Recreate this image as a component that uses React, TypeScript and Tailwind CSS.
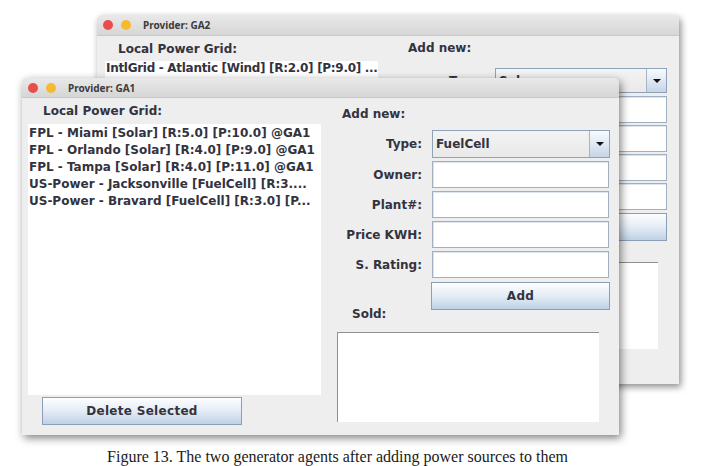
import React from "react";

const F = "[font-family:'DejaVu_Sans',sans-serif]";

function TitleBar({ title, h }: { title: string; h: string }) {
  return (
    <div
      className={`${h} shrink-0 flex items-center rounded-t-[5px] bg-gradient-to-b from-[#e9e9e9] to-[#d6d6d6] border-b border-[#c9c9c9]`}
    >
      <div className="ml-[6px] w-[10px] h-[10px] rounded-full bg-[#ea4c4c]" />
      <div className="ml-[8px] w-[10px] h-[10px] rounded-full bg-[#f4bb30]" />
      <div className="ml-[12px] text-[10px] font-bold text-[#3b3b3b] [font-family:'Noto_Sans',sans-serif] leading-none">
        {title}
      </div>
    </div>
  );
}

function JButton({ label, cls }: { label: string; cls: string }) {
  return (
    <div
      className={`${cls} flex items-center justify-center border border-[#8a9eb4] bg-gradient-to-b from-[#fdfeff] via-[#e4ecf5] to-[#bfd1e5] text-[12px] font-bold tracking-[0.3px] text-[#333340] ${F}`}
    >
      {label}
    </div>
  );
}

function Field({ cls }: { cls: string }) {
  return (
    <div
      className={`${cls} bg-white border border-[#a0b0c1] shadow-[inset_1px_1px_0_#dfe5ec]`}
    />
  );
}

function Combo({ cls, value }: { cls: string; value: string }) {
  return (
    <div
      className={`${cls} flex border border-[#8ea2b8] bg-gradient-to-b from-[#f3f3f3] to-[#e9e9e9]`}
    >
      <div
        className={`flex-1 flex items-center pl-[3px] text-[12px] font-bold text-[#333340] ${F} border-r border-[#a5b5c6]`}
      >
        {value}
      </div>
      <div className="w-[19px] flex items-center justify-center bg-gradient-to-b from-[#fafcfe] to-[#c4d5e7]">
        <div className="w-0 h-0 border-l-[4px] border-r-[4px] border-t-[4px] border-l-transparent border-r-transparent border-t-[#111]" />
      </div>
    </div>
  );
}

function Label({ text, cls }: { text: string; cls: string }) {
  return (
    <div
      className={`${cls} flex items-center justify-end text-[12px] font-bold text-[#333340] ${F} leading-none`}
    >
      {text}
    </div>
  );
}

const frontItems = [
  "FPL - Miami [Solar] [R:5.0] [P:10.0] @GA1",
  "FPL - Orlando [Solar] [R:4.0] [P:9.0] @GA1",
  "FPL - Tampa [Solar] [R:4.0] [P:11.0] @GA1",
  "US-Power - Jacksonville [FuelCell] [R:3....",
  "US-Power - Bravard [FuelCell] [R:3.0] [P...",
];

export default function App() {
  return (
    <div className={`w-[704px] h-[466px] bg-white overflow-hidden ${F}`}>
      <div className="relative h-[448px]">
        {/* Back window GA2 */}
        <div className="absolute left-[97px] top-[15px] w-[582px] h-[369px] flex flex-col bg-[#eeeeee] rounded-t-[5px] shadow-[2px_3px_7px_rgba(0,0,0,0.45)]">
          <TitleBar title="Provider: GA2" h="h-[21px]" />
          <div className="flex flex-1">
            <div className="flex flex-col pl-[8px]">
              <div className="h-[25px] pl-[13px] flex items-center text-[12px] font-bold text-[#333340] leading-none">
                Local Power Grid:
              </div>
              <div className="w-[273px] h-[270px] bg-white pl-[1px] text-[12px] font-bold tracking-[-0.3px] text-[#333340] leading-[15px] whitespace-nowrap overflow-hidden">
                IntlGrid - Atlantic [Wind] [R:2.0] [P:9.0] ...
              </div>
              <JButton label="Delete Selected" cls="ml-[14px] mt-[2px] w-[200px] h-[28px]" />
            </div>
            <div className="flex flex-col ml-[25px]">
              <div className="h-[32px] pl-[5px] pt-[6px] text-[12px] font-bold text-[#333340] leading-[12px]">
                Add new:
              </div>
              <div className="flex">
                <Label text="Type:" cls="w-[82px] h-[25px]" />
                <Combo cls="ml-[10px] w-[172px] h-[25px]" value="Solar" />
              </div>
              <div className="flex mt-[3px]">
                <Label text="Owner:" cls="w-[82px] h-[27px]" />
                <Field cls="ml-[10px] w-[172px] h-[27px]" />
              </div>
              <div className="flex mt-[2px]">
                <Label text="Plant#:" cls="w-[82px] h-[27px]" />
                <Field cls="ml-[10px] w-[172px] h-[27px]" />
              </div>
              <div className="flex mt-[2px]">
                <Label text="Price KWH:" cls="w-[82px] h-[27px]" />
                <Field cls="ml-[10px] w-[172px] h-[27px]" />
              </div>
              <div className="flex mt-[2px]">
                <Label text="S. Rating:" cls="w-[82px] h-[27px]" />
                <Field cls="ml-[10px] w-[172px] h-[27px]" />
              </div>
              <div className="flex mt-[3px]">
                <div className="w-[82px]" />
                <JButton label="Add" cls="ml-[10px] w-[172px] h-[28px]" />
              </div>
              <div className="-mt-[4px] h-[16px] pl-[15px] flex items-center text-[12px] font-bold text-[#333340] leading-none">
                Sold:
              </div>
              <div className="mt-[9px] w-[255px] h-[87px] bg-white border-t border-l border-[#8f8f8f]" />
            </div>
          </div>
        </div>

        {/* Front window GA1 */}
        <div className="absolute left-[22px] top-[78px] w-[597px] h-[357px] flex flex-col bg-[#eeeeee] rounded-t-[5px] shadow-[2px_3px_8px_rgba(0,0,0,0.5)]">
          <TitleBar title="Provider: GA1" h="h-[20px]" />
          <div className="flex flex-1">
            <div className="flex flex-col pl-[6px]">
              <div className="h-[26px] pl-[15px] flex items-center text-[12px] font-bold text-[#333340] leading-none">
                Local Power Grid:
              </div>
              <div className="w-[293px] h-[271px] bg-white pl-[1px] pt-[1px] text-[12px] font-bold text-[#333340] leading-[17px] whitespace-nowrap overflow-hidden">
                {frontItems.map((t) => (
                  <div key={t}>{t}</div>
                ))}
              </div>
              <JButton label="Delete Selected" cls="ml-[14px] mt-[2px] w-[200px] h-[28px]" />
            </div>
            <div className="flex flex-col ml-[16px]">
              <div className="h-[32px] pl-[5px] pt-[10px] text-[12px] font-bold text-[#333340] leading-[12px]">
                Add new:
              </div>
              <div className="flex">
                <Label text="Type:" cls="w-[85px] h-[28px]" />
                <Combo cls="ml-[10px] w-[178px] h-[28px]" value="FuelCell" />
              </div>
              <div className="flex mt-[3px]">
                <Label text="Owner:" cls="w-[85px] h-[27px]" />
                <Field cls="ml-[10px] w-[177px] h-[27px]" />
              </div>
              <div className="flex mt-[3px]">
                <Label text="Plant#:" cls="w-[85px] h-[27px]" />
                <Field cls="ml-[10px] w-[177px] h-[27px]" />
              </div>
              <div className="flex mt-[3px]">
                <Label text="Price KWH:" cls="w-[85px] h-[27px]" />
                <Field cls="ml-[10px] w-[177px] h-[27px]" />
              </div>
              <div className="flex mt-[3px]">
                <Label text="S. Rating:" cls="w-[85px] h-[27px]" />
                <Field cls="ml-[10px] w-[177px] h-[27px]" />
              </div>
              <div className="flex mt-[4px]">
                <div className="w-[85px]" />
                <JButton label="Add" cls="ml-[9px] w-[179px] h-[28px]" />
              </div>
              <div className="-mt-[4px] h-[16px] pl-[15px] flex items-center text-[12px] font-bold text-[#333340] leading-none">
                Sold:
              </div>
              <div className="mt-[10px] w-[262px] h-[90px] bg-white border-t border-l border-[#8f8f8f]" />
            </div>
          </div>
        </div>
      </div>
      <div className="w-[675px] text-center h-[18px] leading-[18px] text-[16px] text-[#1a1a1a] [font-family:'Liberation_Serif',serif]">
        Figure 13. The two generator agents after adding power sources to them
      </div>
    </div>
  );
}
